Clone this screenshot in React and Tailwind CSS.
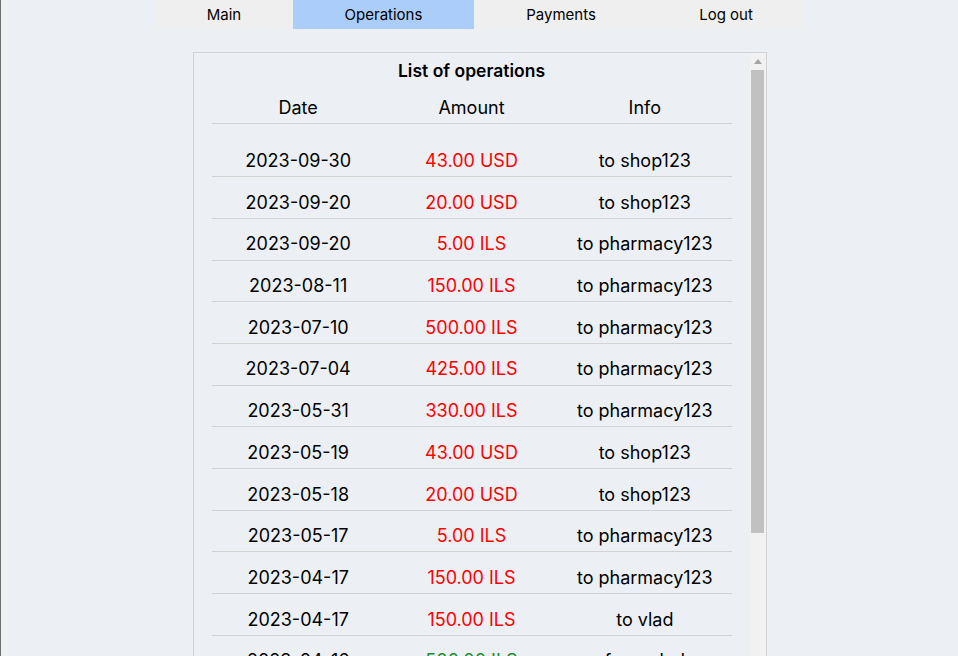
import React from "react";

const rows = [
  ["2023-09-30", "43.00 USD", "to shop123", false],
  ["2023-09-20", "20.00 USD", "to shop123", false],
  ["2023-09-20", "5.00 ILS", "to pharmacy123", false],
  ["2023-08-11", "150.00 ILS", "to pharmacy123", false],
  ["2023-07-10", "500.00 ILS", "to pharmacy123", false],
  ["2023-07-04", "425.00 ILS", "to pharmacy123", false],
  ["2023-05-31", "330.00 ILS", "to pharmacy123", false],
  ["2023-05-19", "43.00 USD", "to shop123", false],
  ["2023-05-18", "20.00 USD", "to shop123", false],
  ["2023-05-17", "5.00 ILS", "to pharmacy123", false],
  ["2023-04-17", "150.00 ILS", "to pharmacy123", false],
  ["2023-04-17", "150.00 ILS", "to vlad", false],
  ["2023-04-16", "500.00 ILS", "from vlad", true],
  ["2023-04-10", "43.00 USD", "to shop123", false],
];

const nav = [
  ["Main", "w-[138px]"],
  ["Operations", "w-[181px] bg-[#abcdfa]"],
  ["Payments", "w-[174px]"],
  ["Log out", "w-[156px]"],
];

export default function App() {
  return (
    <div
      className="h-[656px] overflow-hidden bg-[#ecf0f4] border-l border-l-[#6f6f6f] text-black"
      style={{ fontFamily: "Inter, 'Noto Sans', sans-serif" }}
    >
      <nav className="mx-auto flex w-[649px] bg-[#efefef] h-[29px]">
        {nav.map(([n, c]) => (
          <div
            key={n}
            className={"flex-none flex items-center justify-center text-[15px] leading-none " + c}
          >
            {n}
          </div>
        ))}
      </nav>

      <div className="mx-auto mt-[23px] flex w-[574px] h-[700px] border border-[#d3d3d3] overflow-hidden">
        <div className="flex-1 flex flex-col">
          <h2 className="text-center text-[17.5px] font-semibold leading-[24px] pt-[6px]">
            List of operations
          </h2>
          <div className="mx-auto w-[520px] flex flex-col mt-[13px]">
            <div className="grid grid-cols-3 text-center text-[18px] leading-[24px] h-[28px] border-b border-[#d3d3d3]">
              <div>Date</div>
              <div>Amount</div>
              <div>Info</div>
            </div>
            <div className="mt-[11.5px] flex flex-col">
              {rows.map((r, i) => (
                <div
                  key={i}
                  className="grid grid-cols-3 text-center text-[18px] leading-[24px] h-[41.7px] pt-[13.5px] border-b border-[#d3d3d3]"
                >
                  <div>{r[0]}</div>
                  <div className={r[3] ? "text-[#1f8a2e]" : "text-[#ff0000]"}>{r[1]}</div>
                  <div>{r[2]}</div>
                </div>
              ))}
            </div>
          </div>
        </div>
        <div className="w-[16px] bg-[#f1f1f1] flex flex-col items-center">
          <div className="h-[17px] flex items-center justify-center">
            <svg width="8" height="5" viewBox="0 0 8 5">
              <path d="M0 5 L4 0 L8 5 Z" fill="#a3a3a3" />
            </svg>
          </div>
          <div className="w-[13px] h-[463px] bg-[#c1c1c1]" />
        </div>
      </div>
    </div>
  );
}
